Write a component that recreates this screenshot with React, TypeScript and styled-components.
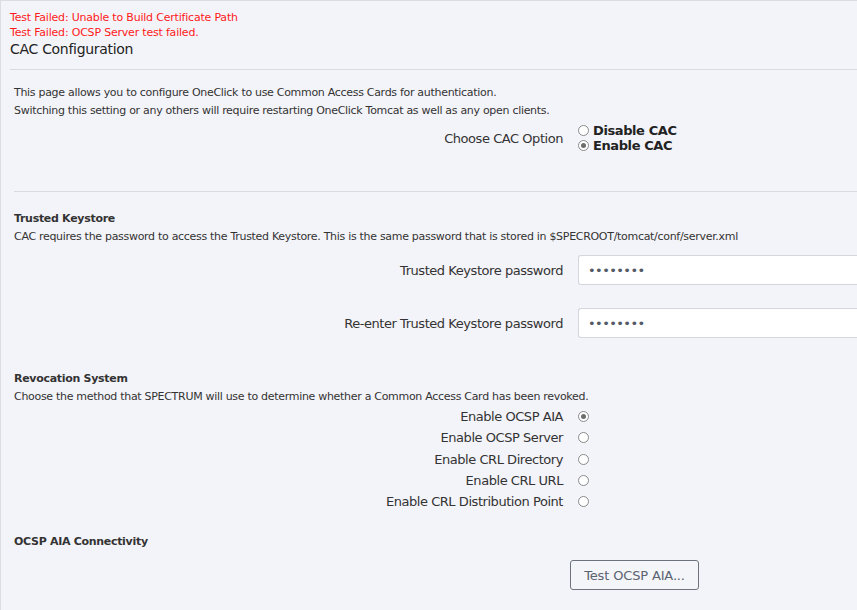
import { createGlobalStyle, styled } from 'styled-components';

const GlobalStyle = createGlobalStyle`
  html, body {
    margin: 0;
    padding: 0;
    background: #f3f4f9;
  }
  body {
    font-family: 'DejaVu Sans', Verdana, sans-serif;
    font-size: 11px;
    letter-spacing: -0.3px;
    color: #333;
  }
`;

const Page = styled.div`
  min-height: 610px;
  box-sizing: border-box;
  border-top: 1px solid #dcdde3;
  border-left: 1px solid #dcdde3;
  background: #f3f4f9;
  overflow: hidden;
`;

const Errors = styled.div`
  padding: 9px 0 0 9px;
`;

const ErrorLine = styled.div`
  color: #ff1a1a;
  font-size: 11px;
  letter-spacing: -0.2px;
  line-height: 15px;
`;

const Title = styled.h3`
  margin: 0 0 11px;
  padding-left: 9px;
  font-size: 14px;
  font-weight: normal;
  letter-spacing: -0.3px;
  line-height: 18px;
  color: #222;
`;

const Divider = styled.hr<{ $indent: number }>`
  border: none;
  border-top: 1px solid #dadbe0;
  margin: 0 0 0 ${props => props.$indent}px;
`;

const Section = styled.section<{ $top?: number; $bottom?: number }>`
  padding: ${props => props.$top ?? 0}px 0 ${props => props.$bottom ?? 0}px 13px;
`;

const Text = styled.p`
  margin: 0;
  line-height: 18px;
  color: #333;
`;

const Heading = styled.h4<{ $top?: number }>`
  margin: ${props => props.$top ?? 0}px 0 0;
  font-size: 11px;
  font-weight: bold;
  line-height: 18px;
  color: #333;
`;

const Row = styled.div<{ $top?: number }>`
  display: grid;
  grid-template-columns: 549px 1fr;
  column-gap: 15px;
  align-items: center;
  margin-top: ${props => props.$top ?? 0}px;
`;

const Label = styled.label`
  text-align: right;
  font-size: 13px;
  letter-spacing: -0.45px;
  color: #333;
`;

const RadioStack = styled.div`
  display: flex;
  flex-direction: column;
`;

const RadioOption = styled.label`
  display: flex;
  align-items: center;
  gap: 4px;
  font-size: 13px;
  font-weight: bold;
  letter-spacing: -0.4px;
  line-height: 15px;
  color: #222;
`;

const Radio = styled.span<{ $checked?: boolean }>`
  width: 9px;
  height: 9px;
  border-radius: 50%;
  border: 1px solid #8a8a8a;
  background: #fff;
  display: inline-flex;
  align-items: center;
  justify-content: center;
  flex: none;

  &::after {
    content: '';
    width: 5px;
    height: 5px;
    border-radius: 50%;
    background: ${props => (props.$checked ? '#6d6d6d' : 'transparent')};
  }
`;

const PasswordInput = styled.div`
  height: 30px;
  box-sizing: border-box;
  border: 1px solid #d3d6dc;
  border-right: none;
  border-radius: 3px 0 0 3px;
  background: #fff;
  display: flex;
  align-items: center;
  padding-left: 9px;
  font-size: 13px;
  letter-spacing: -0.6px;
  color: #555a66;
`;

const MethodRow = styled(Row)`
  height: 21.3px;
`;

const ButtonRow = styled.div`
  padding-left: 556px;
  margin-top: 9px;
`;

const Button = styled.button`
  font-family: 'DejaVu Sans', Verdana, sans-serif;
  font-size: 13px;
  letter-spacing: -0.15px;
  color: #5b6270;
  background: #f4f5f9;
  border: 1px solid #6c737f;
  border-radius: 3px;
  box-sizing: border-box;
  height: 30px;
  width: 129px;
  padding: 0;
`;

const methods = [
  { label: 'Enable OCSP AIA', checked: true },
  { label: 'Enable OCSP Server' },
  { label: 'Enable CRL Directory' },
  { label: 'Enable CRL URL' },
  { label: 'Enable CRL Distribution Point' },
];

export default function App() {
  return (
    <Page>
      <GlobalStyle />
      <Errors>
        <ErrorLine>Test Failed: Unable to Build Certificate Path</ErrorLine>
        <ErrorLine>Test Failed: OCSP Server test failed.</ErrorLine>
      </Errors>
      <Title>CAC Configuration</Title>
      <Divider $indent={9} />
      <Section $top={14}>
        <Text>This page allows you to configure OneClick to use Common Access Cards for authentication.</Text>
        <Text>Switching this setting or any others will require restarting OneClick Tomcat as well as any open clients.</Text>
      </Section>
      <Section $top={3} $bottom={38}>
        <Row>
          <Label>Choose CAC Option</Label>
          <RadioStack>
            <RadioOption>
              <Radio />
              Disable CAC
            </RadioOption>
            <RadioOption>
              <Radio $checked />
              Enable CAC
            </RadioOption>
          </RadioStack>
        </Row>
      </Section>
      <Divider $indent={13} />
      <Section $top={18}>
        <Heading>Trusted Keystore</Heading>
        <Text>CAC requires the password to access the Trusted Keystore. This is the same password that is stored in $SPECROOT/tomcat/conf/server.xml</Text>
        <Row $top={9}>
          <Label>Trusted Keystore password</Label>
          <PasswordInput>••••••••</PasswordInput>
        </Row>
        <Row $top={23}>
          <Label>Re-enter Trusted Keystore password</Label>
          <PasswordInput>••••••••</PasswordInput>
        </Row>
        <Heading $top={32}>Revocation System</Heading>
        <Text>Choose the method that SPECTRUM will use to determine whether a Common Access Card has been revoked.</Text>
        {methods.map(m => (
          <MethodRow key={m.label}>
            <Label>{m.label}</Label>
            <Radio $checked={m.checked} />
          </MethodRow>
        ))}
        <Heading $top={21}>OCSP AIA Connectivity</Heading>
        <ButtonRow>
          <Button>Test OCSP AIA...</Button>
        </ButtonRow>
      </Section>
    </Page>
  );
}
